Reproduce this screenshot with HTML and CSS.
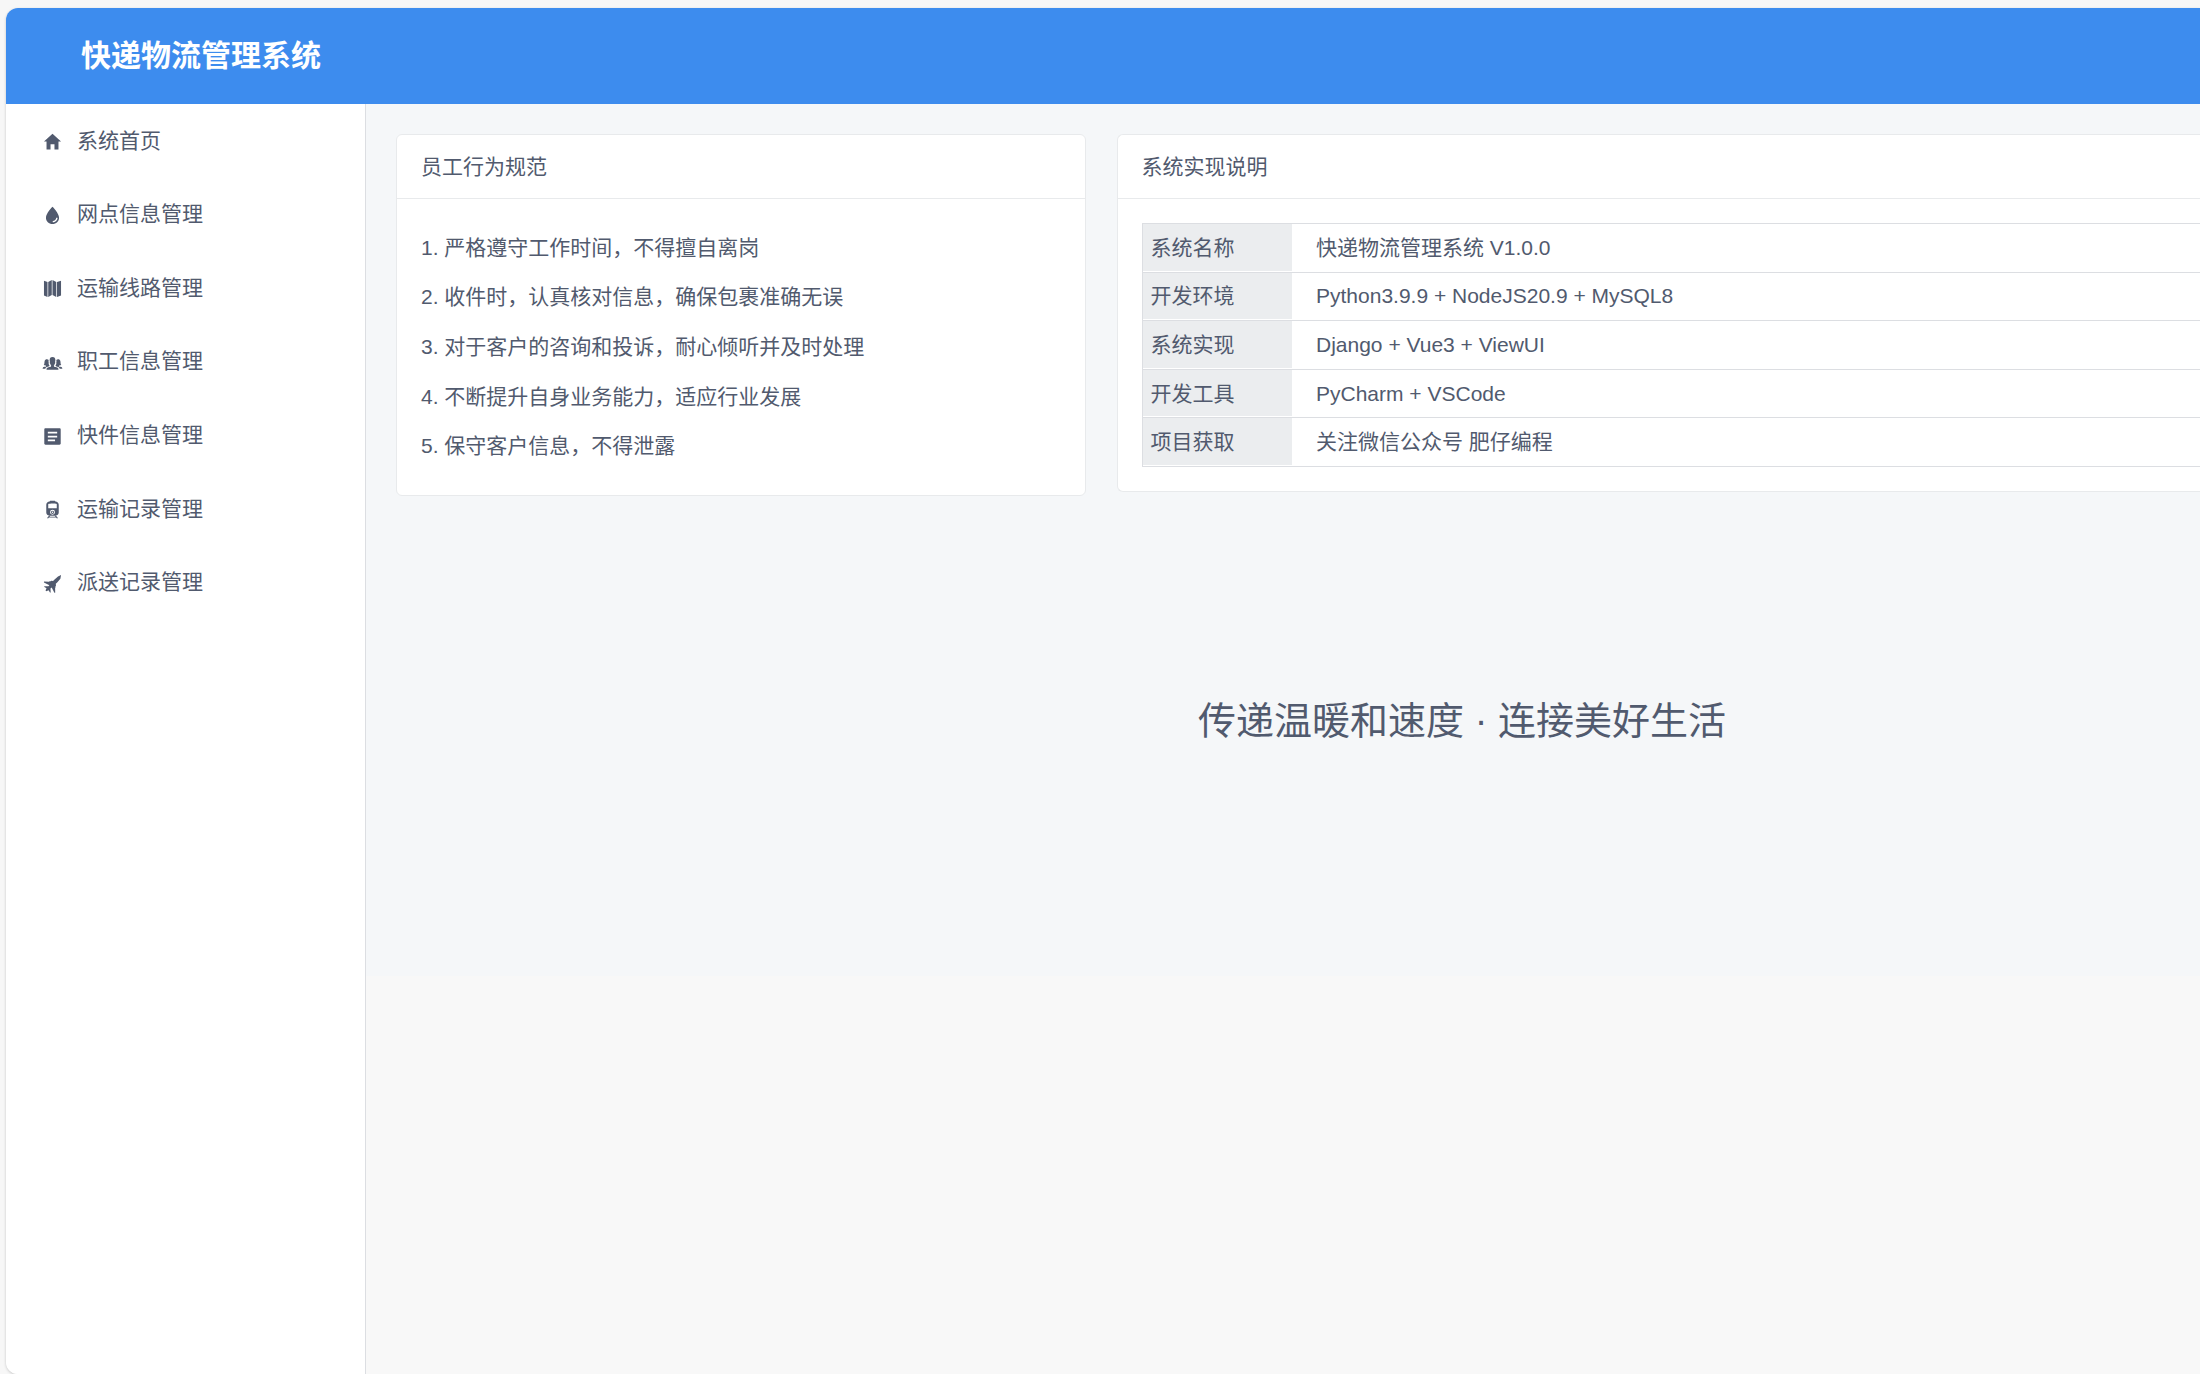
FILE: index.html
```html
<!DOCTYPE html>
<html lang="zh-CN">
<head>
<meta charset="utf-8">
<title>快递物流管理系统</title>
<link rel="stylesheet" href="styles.css">
</head>
<body>
<div class="shell">
  <header class="topbar"><h1 class="brand">快递物流管理系统</h1></header>
  <div class="main">
    <nav class="sidebar">
      <ul class="menu">
        <li><a class="menu-link" href="#home"><svg class="icon" viewBox="0 0 512 512"><path d="M208 448V320h96v128h97.600V256H464L256 64 48 256h62.400v192z"/></svg>系统首页</a></li>
        <li><a class="menu-link" href="#branch"><svg class="icon" viewBox="0 0 512 512"><path fill-rule="evenodd" d="M256 43C256 43 96 205 96 309c0 86 72 155 160 155s160-69 160-155C416 205 256 43 256 43zm6 379v-32c46 0 84-35 84-80h33c0 62-53 112-117 112z"/></svg>网点信息管理</a></li>
        <li><a class="menu-link" href="#route"><svg class="icon" viewBox="0 0 512 512"><path d="M48 64l86 34v366l-86-38zM152 98l86-50v366l-86 50zM256 48l92 50v366l-92-50zM366 98l98-34v362l-98 38z"/></svg>运输线路管理</a></li>
        <li><a class="menu-link" href="#staff"><svg class="icon" viewBox="0 0 512 512"><path d="M359 374c-12-5-44-9-58-14-10-4-12-16-12-28 12-12 15-25 18-42 10-3 14-15 16-29 2-11-5-14-5-15 4-18 8-37 7-54-1-37-19-70-69-70s-68 33-69 70c-1 17 3 36 7 54 0 1-7 4-5 15 2 14 6 26 16 29 3 17 6 30 18 42 0 12-2 24-12 28-14 5-46 9-58 14-36 14-43 30-43 56h292c0-26-7-42-43-56z"/><path d="M104 352c-9-5-10-16-10-25-26 0-42-6-52-10 24-20 12-63 24-103 7-25 24-40 53-40 20 0 34 8 43 21-6 25-3 47 2 68-6 28 1 46 17 57 0 11 1 20-8 25-20 7-50 12-70 29-16 13-20 22-22 36H16c0-37 14-44 46-51 17-4 33-3 42-7zM408 352c9-5 10-16 10-25 26 0 42-6 52-10-24-20-12-63-24-103-7-25-24-40-53-40-20 0-34 8-43 21 6 25 3 47-2 68 6 28-1 46-17 57 0 11-1 20 8 25 20 7 50 12 70 29 16 13 20 22 22 36h65c0-37-14-44-46-51-17-4-33-3-42-7z"/></svg>职工信息管理</a></li>
        <li><a class="menu-link" href="#parcel"><svg class="icon" viewBox="0 0 512 512"><path fill-rule="evenodd" d="M428 56H84c-16 0-28 12-28 28v344c0 16 12 28 28 28h344c16 0 28-12 28-28V84c0-16-12-28-28-28zM318 372H142v-42h176zm52-94H142v-42h228zm0-94H142v-42h228z"/></svg>快件信息管理</a></li>
        <li><a class="menu-link" href="#transport"><svg class="icon" viewBox="0 0 512 512"><path fill-rule="evenodd" d="M200 40h112l16 22c42 6 80 34 80 78v192c0 42-34 76-76 76H180c-42 0-76-34-76-76V140c0-44 38-72 80-78zM152 122v104h208V122c-40-18-168-18-208 0zm104 142a60 60 0 1 0 0 120 60 60 0 0 0 0-120zm0 20a40 40 0 1 1 0 80 40 40 0 0 1 0-80zm0 22a18 18 0 1 0 0 36 18 18 0 0 0 0-36z"/><path d="M168 408h34l-18 24h144l-18-24h34l48 60h-36l-12-14H168l-12 14h-36z"/></svg>运输记录管理</a></li>
        <li><a class="menu-link" href="#delivery"><svg class="icon" viewBox="0 0 512 512"><path d="M464 48l-74 36-90 78-30 34-44-6-14 14-30-4-10 12-124-2v20l132 66-24 30-96-6-10 14 60 38-24 54 20 20 54-24 38 60 14-10-6-96 30-24 66 132h20l-2-124 12-10-4-30 14-14-6-44 34-30 78-90z"/></svg>派送记录管理</a></li>
      </ul>
    </nav>
    <main class="content">
      <div class="page">
        <div class="cards">
          <section class="card">
            <h2 class="card-title">员工行为规范</h2>
            <div class="card-body">
              <div class="rules">
                <p>1. 严格遵守工作时间，不得擅自离岗</p>
                <p>2. 收件时，认真核对信息，确保包裹准确无误</p>
                <p>3. 对于客户的咨询和投诉，耐心倾听并及时处理</p>
                <p>4. 不断提升自身业务能力，适应行业发展</p>
                <p>5. 保守客户信息，不得泄露</p>
              </div>
            </div>
          </section>
          <section class="card card-flush">
            <h2 class="card-title">系统实现说明</h2>
            <div class="card-body">
              <table class="info">
                <tbody>
                  <tr><th scope="row">系统名称</th><td>快递物流管理系统 V1.0.0</td></tr>
                  <tr><th scope="row">开发环境</th><td>Python3.9.9 + NodeJS20.9 + MySQL8</td></tr>
                  <tr><th scope="row">系统实现</th><td>Django + Vue3 + ViewUI</td></tr>
                  <tr><th scope="row">开发工具</th><td>PyCharm + VSCode</td></tr>
                  <tr><th scope="row">项目获取</th><td>关注微信公众号 肥仔编程</td></tr>
                </tbody>
              </table>
            </div>
          </section>
        </div>
        <p class="slogan">传递温暖和速度 · 连接美好生活</p>
      </div>
    </main>
  </div>
</div>
</body>
</html>
```

FILE: styles.css
```css
* {
  box-sizing: border-box;
}

body {
  margin: 0;
  padding: 8px 0 0 6px;
  background: #f7f7f7;
  color: #515a6e;
  font: 21px/32px "Liberation Sans", "Noto Sans CJK SC", sans-serif;
}

h1, h2, p, ul {
  margin: 0;
  padding: 0;
}

.shell {
  display: flex;
  flex-direction: column;
  min-height: calc(100vh - 8px);
  border-radius: 12px 0 0 12px;
  overflow: hidden;
  background: #f8f8f8;
  box-shadow: 0 1px 3px rgba(0, 0, 0, 0.2);
}

.topbar {
  display: flex;
  align-items: center;
  height: 96px;
  padding: 0 75px;
  background: #3d8cee;
  color: #fff;
}

.brand {
  font-size: 30px;
  line-height: 40px;
  font-weight: 700;
}

.main {
  display: flex;
  flex: 1;
}

.sidebar {
  flex: 0 0 360px;
  border-right: 1px solid #dcdee2;
  background: #fff;
}

.menu {
  display: grid;
  grid-auto-rows: 1fr;
  height: 515px;
  list-style: none;
}

.menu-link {
  display: flex;
  align-items: center;
  gap: 14px;
  height: 100%;
  padding: 0 36px;
  color: inherit;
  text-decoration: none;
}

.icon {
  width: 21px;
  height: 21px;
  margin-top: 2px;
  fill: currentColor;
}

.content {
  flex: 1;
}

.page {
  min-height: 872px;
  padding: 30px 0 30px 30px;
  background: #f5f7f9;
}

.cards {
  display: grid;
  grid-template-columns: 7fr 11fr;
  align-items: start;
  gap: 31px;
}

.card {
  border: 1px solid #e8eaec;
  border-radius: 6px;
  background: #fff;
}

/* The second card and its table run to the window's right edge. */
.card-flush {
  border-right: 0;
  border-radius: 6px 0 0 6px;
}

.card-title {
  padding: 16px 24px 15px;
  border-bottom: 1px solid #e8eaec;
  font-size: 21px;
  font-weight: 400;
}

.card-body {
  padding: 24px;
}

.card-flush .card-body {
  padding-right: 0;
}

.rules {
  display: grid;
  grid-auto-rows: 1fr;
  align-items: center;
  height: 248px;
}

.info {
  width: 100%;
  height: 244px;
  border: 1px solid #dcdee2;
  border-right: 0;
  border-collapse: collapse;
}

.info tr {
  border-bottom: 1px solid #dcdee2;
}

.info th,
.info td {
  padding: 0 24px;
  text-align: left;
  font-weight: 400;
}

.info th {
  width: 150px;
  padding: 0 8px;
  background: #ebedef;
  box-shadow: inset 0 -1px #fff;
}

.slogan {
  margin-top: 193px;
  padding-left: 328px;
  text-align: center;
  font-size: 38px;
  line-height: 64px;
}
```
